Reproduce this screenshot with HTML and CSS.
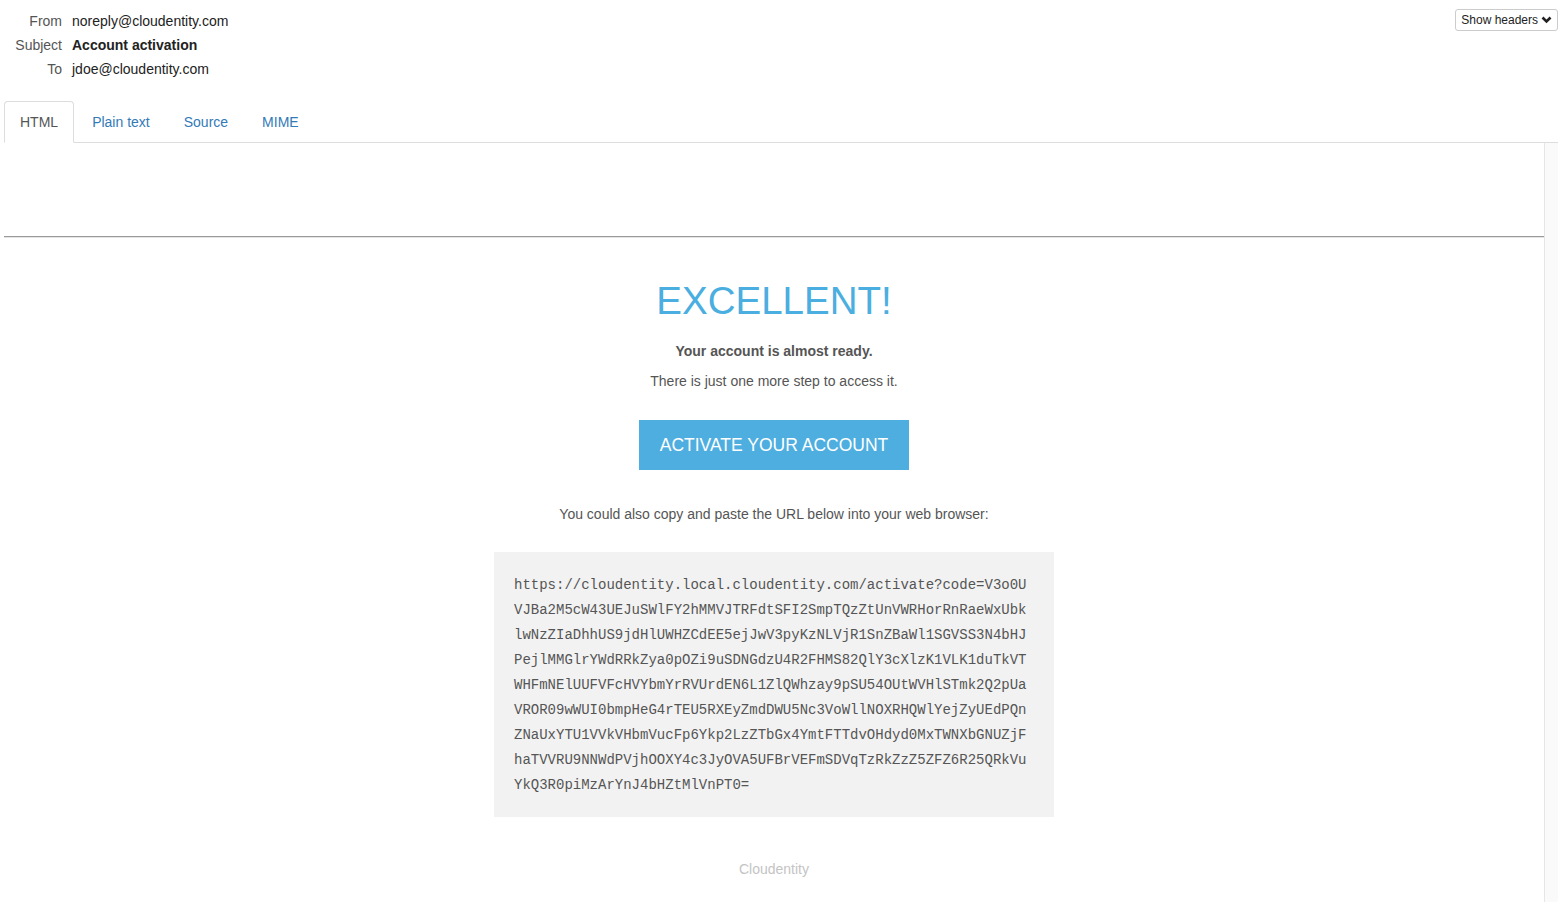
FILE: index.html
```html
<!DOCTYPE html>
<html lang="en">
<head>
    <meta charset="UTF-8">
    <meta name="viewport" content="width=device-width, initial-scale=1.0">
    <title>Account activation</title>
    <link rel="stylesheet" href="styles.css">
</head>
<body>
    <div class="top">
        <div class="headers">
            <span class="label">From</span>
            <span class="value">noreply@cloudentity.com</span>
            <span class="label">Subject</span>
            <span class="value subject">Account activation</span>
            <span class="label">To</span>
            <span class="value">jdoe@cloudentity.com</span>
        </div>
        <button class="show-headers">Show headers
            <svg width="11" height="8" viewBox="0 0 11 8"><polyline points="1.5,1.5 5.5,5.5 9.5,1.5" fill="none" stroke="#222" stroke-width="2.6"/></svg>
        </button>
    </div>

    <ul class="tabs">
        <li class="tab active">HTML</li>
        <li class="tab">Plain text</li>
        <li class="tab">Source</li>
        <li class="tab">MIME</li>
    </ul>

    <div class="viewer">
        <div class="frame">
            <div class="mail-head"></div>
            <hr>
            <div class="mail">
                <h1>EXCELLENT!</h1>
                <p class="lead">Your account is almost ready.</p>
                <p class="step">There is just one more step to access it.</p>
                <a class="activate">ACTIVATE YOUR ACCOUNT</a>
                <p class="copy">You could also copy and paste the URL below into your web browser:</p>
                <div class="url">https://cloudentity.local.cloudentity.com/activate?code=V3o0UVJBa2M5cW43UEJuSWlFY2hMMVJTRFdtSFI2SmpTQzZtUnVWRHorRnRaeWxUbklwNzZIaDhhUS9jdHlUWHZCdEE5ejJwV3pyKzNLVjR1SnZBaWl1SGVSS3N4bHJPejlMMGlrYWdRRkZya0pOZi9uSDNGdzU4R2FHMS82QlY3cXlzK1VLK1duTkVTWHFmNElUUFVFcHVYbmYrRVUrdEN6L1ZlQWhzay9pSU54OUtWVHlSTmk2Q2pUaVROR09wWUI0bmpHeG4rTEU5RXEyZmdDWU5Nc3VoWllNOXRHQWlYejZyUEdPQnZNaUxYTU1VVkVHbmVucFp6Ykp2LzZTbGx4YmtFTTdvOHdyd0MxTWNXbGNUZjFhaTVVRU9NNWdPVjhOOXY4c3JyOVA5UFBrVEFmSDVqTzRkZzZ5ZFZ6R25QRkVuYkQ3R0piMzArYnJ4bHZtMlVnPT0=</div>
                <p class="footer">Cloudentity</p>
            </div>
        </div>
        <div class="scrollbar"></div>
    </div>
</body>
</html>
```

FILE: styles.css
```css
/* base */
* {
    margin: 0;
    padding: 0;
    box-sizing: border-box;
}

body {
    font-family: 'Liberation Sans', Arial, sans-serif;
    font-size: 14px;
    color: #333;
    background: #fff;
    height: 902px;
    overflow: hidden;
    display: flex;
    flex-direction: column;
}

/* message headers */
.top {
    display: flex;
    justify-content: space-between;
    align-items: flex-start;
    padding: 9px 0 0 4px;
}

.headers {
    display: grid;
    grid-template-columns: 58px auto;
    column-gap: 10px;
    line-height: 24px;
}

.headers .label {
    text-align: right;
    color: #555;
}

.headers .value {
    color: #222;
}

.headers .subject {
    font-weight: bold;
}

.show-headers {
    display: flex;
    align-items: center;
    gap: 3px;
    height: 22px;
    padding: 0 5px;
    font-family: 'Liberation Sans', Arial, sans-serif;
    font-size: 12px;
    color: #222;
    background: #fff;
    border: 1px solid #ccc;
    border-radius: 3px;
}

/* tabs */
.tabs {
    list-style: none;
    display: flex;
    margin: 20px 0 0 4px;
    border-bottom: 1px solid #ddd;
}

.tab {
    padding: 10px 15px;
    margin-right: 2px;
    margin-bottom: -1px;
    line-height: 20px;
    color: #337ab7;
    border: 1px solid transparent;
    border-radius: 4px 4px 0 0;
}

.tab.active {
    color: #555;
    background: #fff;
    border-color: #ddd #ddd transparent;
}

/* message body */
.viewer {
    flex: 1;
    display: flex;
    margin-left: 4px;
}

.frame {
    flex: 1;
    color: #555;
}

.scrollbar {
    width: 14px;
    background: #fafafa;
    border-left: 1px solid #e6e6e6;
}

.mail-head {
    height: 93px;
}

hr {
    border: none;
    border-top: 1px solid #9a9a9a;
    border-bottom: 1px solid #e4e4e4;
}

.mail {
    display: flex;
    flex-direction: column;
    align-items: center;
    text-align: center;
}

.mail h1 {
    margin-top: 43px;
    font-size: 38.5px;
    line-height: 40px;
    font-weight: normal;
    color: #4aaee0;
}

.mail p {
    line-height: 20px;
}

.lead {
    margin-top: 20px;
    font-weight: bold;
}

.step {
    margin-top: 10px;
}

.activate {
    margin-top: 29px;
    width: 270px;
    height: 50px;
    line-height: 50px;
    font-size: 17.5px;
    color: #fff;
    background: #4eaee0;
}

.copy {
    margin-top: 34px;
}

.url {
    margin-top: 28px;
    width: 560px;
    padding: 21px 20px 19px;
    background: #f2f2f2;
    text-align: left;
    font-family: 'Liberation Mono', 'Courier New', monospace;
    font-size: 14px;
    line-height: 25px;
    color: #555;
    word-break: break-all;
}

.footer {
    margin-top: 42px;
    color: #c4c4c4;
}
```
